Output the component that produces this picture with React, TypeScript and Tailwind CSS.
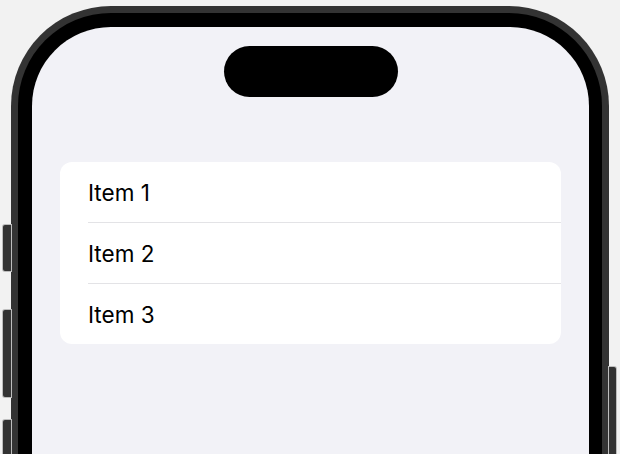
const items = ["Item 1", "Item 2", "Item 3"];

export default function App() {
  return (
    <div className="relative h-[454px] w-[620px] overflow-hidden bg-[#f2f2f2] pl-[11px] pt-[6px] font-['Inter',sans-serif]">
      {/* side buttons */}
      <div className="absolute left-[3px] top-[225px] h-[46px] w-[8px] rounded-l-[2px] bg-[#333333] shadow-[0_0_0_1px_#bdbdbd]" />
      <div className="absolute left-[3px] top-[310px] h-[87px] w-[8px] rounded-l-[2px] bg-[#333333] shadow-[0_0_0_1px_#bdbdbd]" />
      <div className="absolute left-[3px] top-[420px] h-[87px] w-[8px] rounded-l-[2px] bg-[#333333] shadow-[0_0_0_1px_#bdbdbd]" />
      <div className="absolute left-[609px] top-[367px] h-[120px] w-[7px] rounded-r-[2px] bg-[#333333] shadow-[0_0_0_1px_#bdbdbd]" />

      <div className="h-[640px] w-[598px] rounded-[100px] bg-[#333333] p-[7px]">
        <div className="h-full w-full rounded-[93px] bg-black py-[14px] pl-[14px] pr-[13px]">
          <div className="flex h-full w-full flex-col items-center rounded-[79px] bg-[#f2f2f7] pl-[28px] pr-[28px]">
            <div className="mt-[19px] h-[51px] w-[174px] rounded-full bg-black" />
            <ul className="mt-[65px] self-stretch rounded-[12px] bg-white">
              {items.map((item, index) => (
                <li key={index} className="pl-[28px]">
                  <div
                    className={
                      index < items.length - 1
                        ? "flex h-[61px] items-center border-b border-[#e3e3e6] pt-[2px] text-[22.5px] text-black"
                        : "flex h-[60px] items-center pt-[2px] text-[22.5px] text-black"
                    }
                  >
                    {item}
                  </div>
                </li>
              ))}
            </ul>
          </div>
        </div>
      </div>
    </div>
  );
}
